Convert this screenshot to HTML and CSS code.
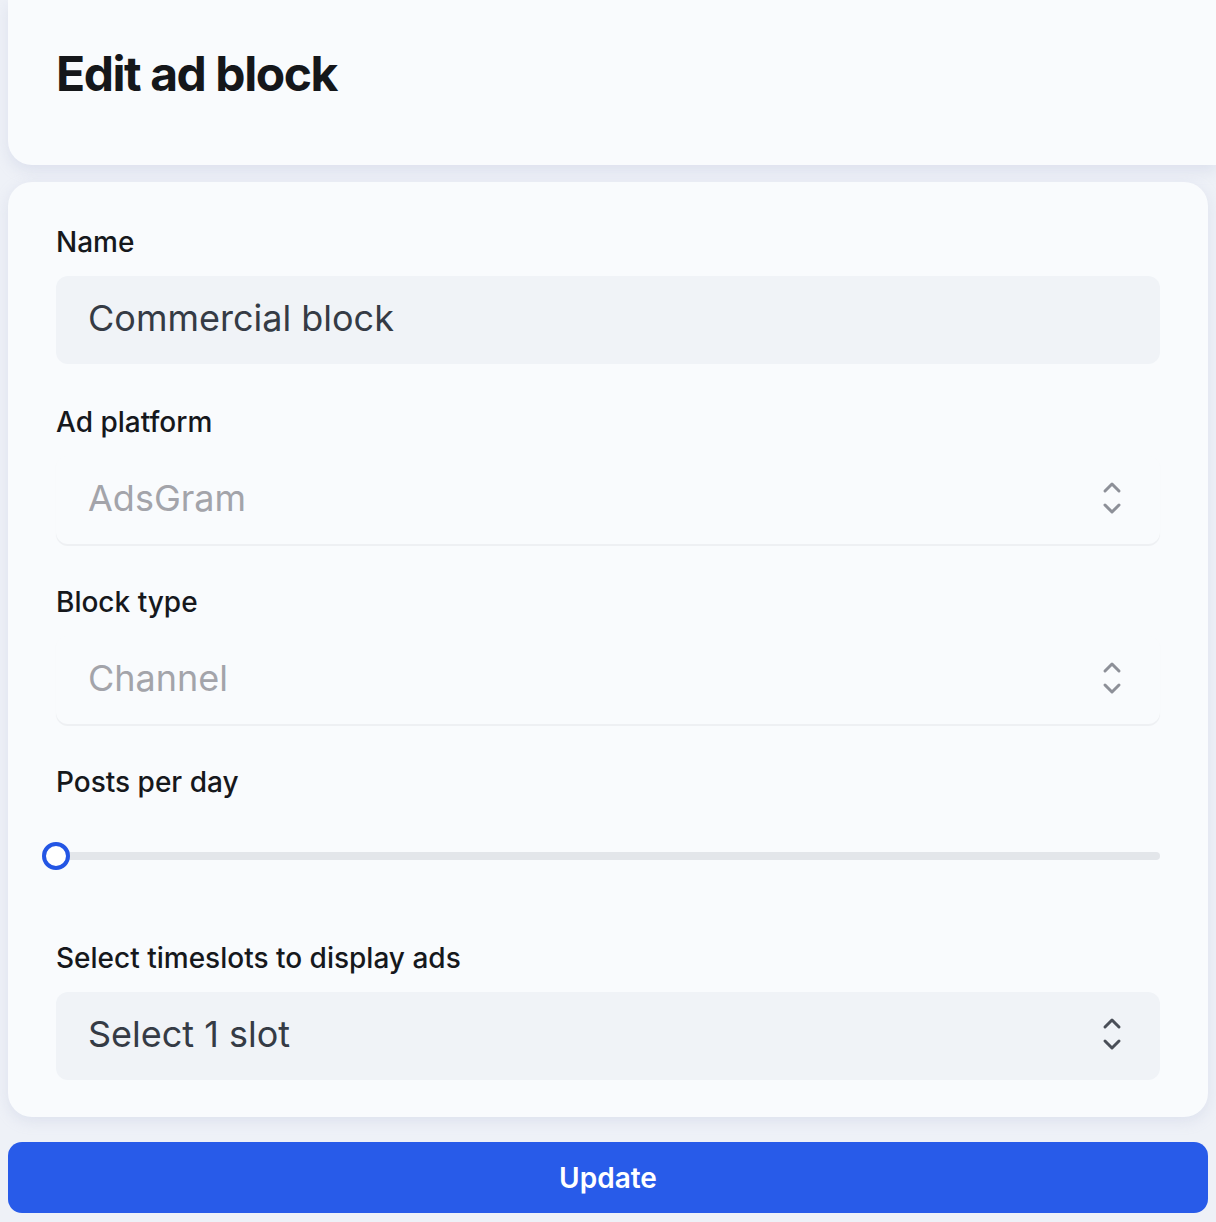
FILE: index.html
```html
<!DOCTYPE html>
<html lang="en">
<head>
<meta charset="utf-8">
<title>Edit ad block</title>
<link rel="stylesheet" href="styles.css">
</head>
<body>
<div class="page">
  <header class="head-card">
    <h1 class="title">Edit ad block</h1>
  </header>

  <form class="form-card">
    <div class="field">
      <label class="label">Name</label>
      <div class="input filled">Commercial block</div>
    </div>

    <div class="field">
      <label class="label">Ad platform</label>
      <div class="input select disabled">
        <span>AdsGram</span>
        <svg class="chev" viewBox="0 0 20 36" width="20" height="36">
          <path d="M3 11 L10 4 L17 11"/>
          <path d="M3 25 L10 32 L17 25"/>
        </svg>
      </div>
    </div>

    <div class="field">
      <label class="label">Block type</label>
      <div class="input select disabled">
        <span>Channel</span>
        <svg class="chev" viewBox="0 0 20 36" width="20" height="36">
          <path d="M3 11 L10 4 L17 11"/>
          <path d="M3 25 L10 32 L17 25"/>
        </svg>
      </div>
    </div>

    <div class="field range-field">
      <label class="label">Posts per day</label>
      <div class="slider">
        <div class="track"></div>
        <div class="thumb"></div>
      </div>
    </div>

    <div class="field last">
      <label class="label">Select timeslots to display ads</label>
      <div class="input select filled">
        <span>Select 1 slot</span>
        <svg class="chev dark" viewBox="0 0 20 36" width="20" height="36">
          <path d="M3 11 L10 4 L17 11"/>
          <path d="M3 25 L10 32 L17 25"/>
        </svg>
      </div>
    </div>
  </form>

  <button class="btn" type="button">Update</button>
</div>
</body>
</html>
```

FILE: styles.css
```css
* { box-sizing: border-box; }

html, body {
  margin: 0;
  padding: 0;
  background: #eef1f7;
  font-family: Inter, "Noto Sans", "Liberation Sans", sans-serif;
  color: #111418;
  overflow-x: hidden;
}

.page {
  display: flex;
  flex-direction: column;
  padding: 0 0 0 8px;
}

.head-card {
  background: #f9fbfd;
  border-bottom-left-radius: 24px;
  padding: 42px 48px 59px;
  box-shadow: 0 6px 14px rgba(170, 180, 210, 0.25);
}

.title {
  margin: 0;
  font-size: 48px;
  line-height: 64px;
  font-weight: 700;
  letter-spacing: -0.03em;
  color: #15171a;
}

.form-card {
  margin: 17px 8px 0 0;
  background: #f9fbfd;
  border-radius: 24px;
  padding: 40px 48px 37px;
  box-shadow: 0 4px 14px rgba(170, 180, 210, 0.25);
  display: flex;
  flex-direction: column;
}

.field {
  display: flex;
  flex-direction: column;
  margin-bottom: 38px;
}
.field.range-field { margin-bottom: 42px; }
.field.last { margin-bottom: 0; }

.label {
  font-size: 28px;
  line-height: 40px;
  font-weight: 500;
  color: #16181c;
  margin-bottom: 14px;
}

.input {
  height: 88px;
  border-radius: 12px;
  padding: 0 31px 4px 32px;
  display: flex;
  align-items: center;
  font-size: 36px;
  line-height: 44px;
  color: #353b45;
}

.input.filled {
  background: #f0f3f7;
}

.input.disabled {
  background: #f9fbfd;
  color: #a3a4aa;
  box-shadow: 0 2px 0 #eef0f3, 0 1px 3px rgba(0, 0, 0, 0.02);
}

.select {
  justify-content: space-between;
}

.chev {
  margin-right: 7px;
  fill: none;
  stroke: #8d9098;
  stroke-width: 3;
  stroke-linecap: round;
  stroke-linejoin: round;
}
.chev.dark { stroke: #4a4f58; }

.slider {
  position: relative;
  height: 80px;
  display: flex;
  align-items: center;
}

.track {
  flex: 1;
  height: 8px;
  border-radius: 4px;
  background: #e3e6ea;
}

.thumb {
  position: absolute;
  left: -14px;
  top: 26px;
  width: 28px;
  height: 28px;
  border-radius: 50%;
  background: #ffffff;
  border: 4px solid #2456e4;
}

.btn {
  margin: 25px 8px 0 0;
  height: 71px;
  border: none;
  border-radius: 14px;
  background: #285be9;
  color: #ffffff;
  font-family: Inter, "Noto Sans", "Liberation Sans", sans-serif;
  font-size: 28px;
  font-weight: 600;
}
```
